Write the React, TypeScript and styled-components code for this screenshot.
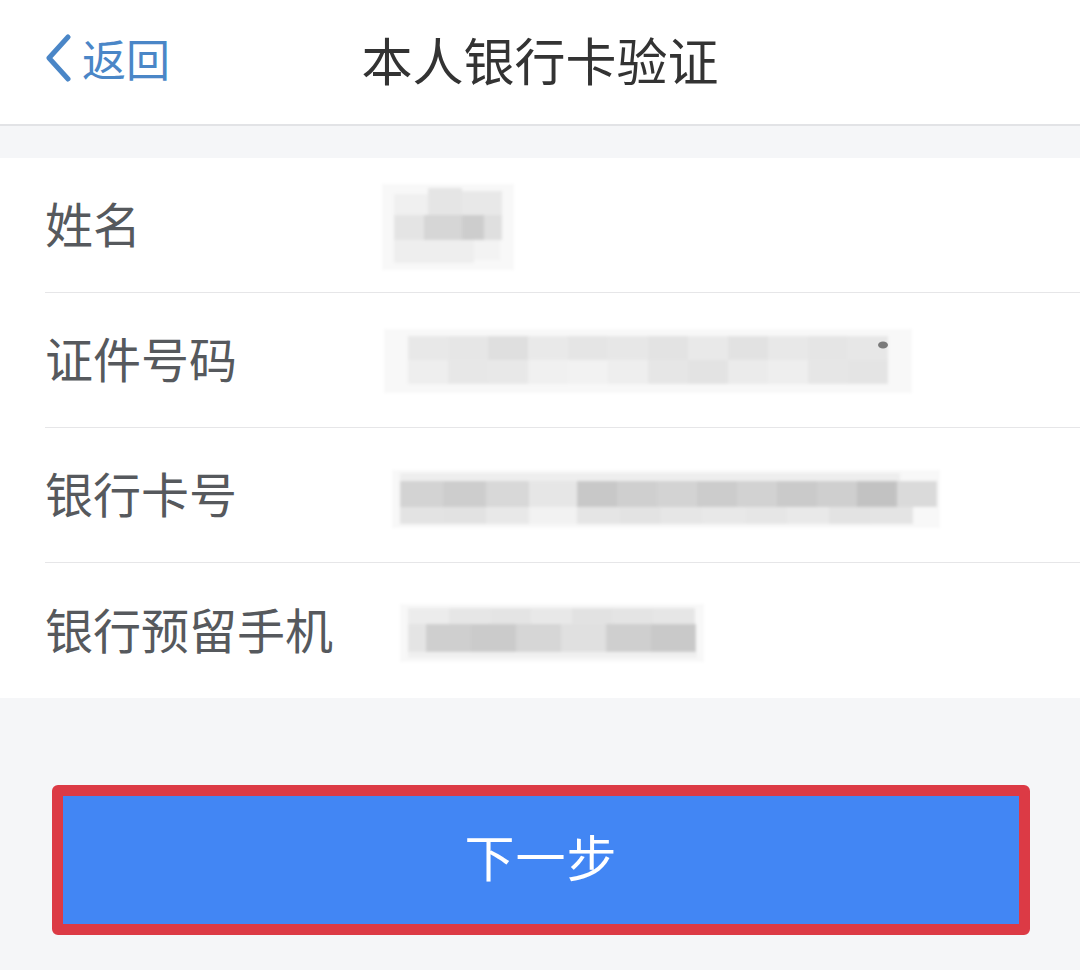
import React, { useId } from "react";
import styled, { createGlobalStyle } from "styled-components";

const GlobalStyle = createGlobalStyle`
  html, body {
    margin: 0;
    padding: 0;
    background: #f5f6f8;
  }
  body {
    font-family: "Noto Sans CJK SC", "Noto Sans", sans-serif;
  }
`;

const Page = styled.div`
  width: 1080px;
  min-height: 970px;
  background: #f5f6f8;
  display: flex;
  flex-direction: column;
`;

const Header = styled.header`
  height: 124px;
  background: #ffffff;
  border-bottom: 2px solid #e2e3e6;
  display: grid;
  grid-template-columns: 1fr auto 1fr;
  align-items: center;
`;

const BackButton = styled.button`
  justify-self: start;
  display: flex;
  align-items: center;
  gap: 10px;
  margin-left: 44px;
  padding: 0;
  border: none;
  background: none;
  color: #4a86c7;
  font-family: "Noto Sans CJK SC", sans-serif;
  font-size: 44px;
  line-height: 1;
  margin-top: -8px;
`;

const Title = styled.h1`
  margin: 0;
  margin-top: -6px;
  font-size: 51px;
  font-weight: 400;
  color: #333333;
  font-family: "Noto Sans CJK SC", sans-serif;
`;

const Card = styled.section`
  margin-top: 32px;
  background: #ffffff;
  display: flex;
  flex-direction: column;
`;

const Row = styled.div<{ $last?: boolean }>`
  box-sizing: border-box;
  height: 135px;
  display: flex;
  align-items: center;
  margin-left: 45px;
  border-bottom: ${(p) => (p.$last ? "none" : "1px solid #e6e6e8")};
`;

const Label = styled.span`
  width: 335px;
  font-size: 48px;
  color: #56595d;
  font-family: "Noto Sans CJK SC", sans-serif;
  line-height: 1;
  margin-top: -6px;
`;

const ValueArt = styled.svg`
  display: block;
  flex: none;
`;

const ButtonArea = styled.div`
  padding: 87px 50px 0 52px;
`;

const NextButton = styled.button`
  width: 978px;
  height: 150px;
  box-sizing: border-box;
  border: 11px solid #dc3a45;
  border-radius: 6px;
  background: #4286f4;
  color: #ffffff;
  font-family: "Noto Sans CJK SC", sans-serif;
  font-size: 50px;
  letter-spacing: 1px;
  display: flex;
  align-items: center;
  justify-content: center;
  padding: 0 0 10px 0;
`;

type Cell = [number, number, number, number, string];

const BlurredValue: React.FC<{ cells: Cell[]; dot?: [number, number] }> = ({ cells, dot }) => {
  const id = useId().replace(/:/g, "");
  return (
    <ValueArt width={600} height={134} viewBox="0 0 600 134">
      <defs>
        <filter id={`b${id}`} x="-10%" y="-30%" width="120%" height="160%">
          <feGaussianBlur stdDeviation="1.6" />
        </filter>
      </defs>
      <g filter={`url(#b${id})`}>
        {cells.map(([x, y, w, h, c], i) => (
          <rect key={i} x={x} y={y} width={w} height={h} fill={c} />
        ))}
      </g>
      {dot && <ellipse cx={dot[0]} cy={dot[1]} rx={5} ry={3.5} fill="#7a7a7a" />}
    </ValueArt>
  );
};

// value art origin: x = 380 (page), y = row top
const band = (x0: number, y: number, h: number, w: number, shades: string[]): Cell[] =>
  shades.map((s, i) => [x0 + i * w, y, w, h, s] as Cell);

const nameCells: Cell[] = [
  [2, 26, 132, 86, "#f8f8f8"],
  [14, 36, 34, 21, "#f0f0f0"],
  [48, 30, 34, 27, "#e5e5e5"],
  [82, 33, 40, 24, "#e8e8e8"],
  [14, 57, 30, 25, "#e4e4e4"],
  [44, 57, 38, 25, "#d6d6d6"],
  [82, 57, 22, 25, "#cdcdcd"],
  [104, 57, 18, 25, "#dfdfdf"],
  [14, 82, 80, 23, "#eeeeee"],
  [94, 82, 26, 20, "#f3f3f3"],
];

const idCells: Cell[] = [
  [4, 36, 528, 64, "#f8f8f8"],
  ...band(28, 43, 24, 40, ["#e8e8e8", "#e6e6e6", "#dfdfdf", "#e9e9e9", "#e5e5e5", "#e7e7e7", "#e3e3e3", "#e9e9e9", "#e2e2e2", "#e8e8e8", "#e5e5e5", "#e7e7e7"]),
  ...band(28, 67, 24, 40, ["#eeeeee", "#e7e7e7", "#e8e8e8", "#f0f0f0", "#f2f2f2", "#eeeeee", "#e6e6e6", "#e3e3e3", "#ebebeb", "#eeeeee", "#e6e6e6", "#e4e4e4"]),
];

const cardCells: Cell[] = [
  [12, 42, 548, 58, "#f8f8f8"],
  [20, 45, 500, 8, "#eeeeee"],
  ...band(20, 53, 26, 43, ["#d3d3d3", "#cdcdcd", "#d8d8d8"]),
  [149, 53, 48, 26, "#e6e6e6"],
  ...band(197, 53, 26, 40, ["#c8c8c8", "#cfcfcf", "#d3d3d3", "#cccccc", "#d2d2d2", "#cacaca", "#cfcfcf", "#c2c2c2", "#dadada"]),
  ...band(20, 79, 17, 43, ["#e3e3e3", "#e2e2e2", "#e8e8e8"]),
  [149, 79, 48, 17, "#f2f2f2"],
  ...band(197, 79, 17, 42, ["#e5e5e5", "#e3e3e3", "#e6e6e6", "#e8e8e8", "#e6e6e6", "#e9e9e9", "#e3e3e3", "#e4e4e4"]),
];

const phoneCells: Cell[] = [
  [20, 40, 304, 58, "#f8f8f8"],
  ...band(28, 44, 16, 41, ["#ececec", "#e6e6e6", "#e4e4e4", "#e8e8e8", "#e2e2e2", "#e4e4e4", "#e6e6e6"]),
  [28, 60, 18, 28, "#e4e4e4"],
  ...band(46, 60, 28, 45, ["#cfcfcf", "#cbcbcb", "#d6d6d6", "#e0e0e0", "#cfcfcf", "#c9c9c9"]),
  [28, 88, 289, 6, "#f0f0f0"],
];

const ChevronLeft = () => (
  <svg width="28" height="48" viewBox="0 0 28 48" aria-hidden>
    <path d="M24 3 L5 24 L24 45" fill="none" stroke="#4a86c7" strokeWidth="5" strokeLinecap="round" strokeLinejoin="round" />
  </svg>
);

const rows = [
  { label: "姓名", cells: nameCells },
  { label: "证件号码", cells: idCells, dot: [503, 52] as [number, number] },
  { label: "银行卡号", cells: cardCells },
  { label: "银行预留手机", cells: phoneCells },
];

export default function App() {
  return (
    <Page>
      <GlobalStyle />
      <Header>
        <BackButton>
          <ChevronLeft />
          返回
        </BackButton>
        <Title>本人银行卡验证</Title>
        <span />
      </Header>
      <Card>
        {rows.map((r, i) => (
          <Row key={r.label} $last={i === rows.length - 1}>
            <Label>{r.label}</Label>
            <BlurredValue cells={r.cells} dot={r.dot} />
          </Row>
        ))}
      </Card>
      <ButtonArea>
        <NextButton>下一步</NextButton>
      </ButtonArea>
    </Page>
  );
}
